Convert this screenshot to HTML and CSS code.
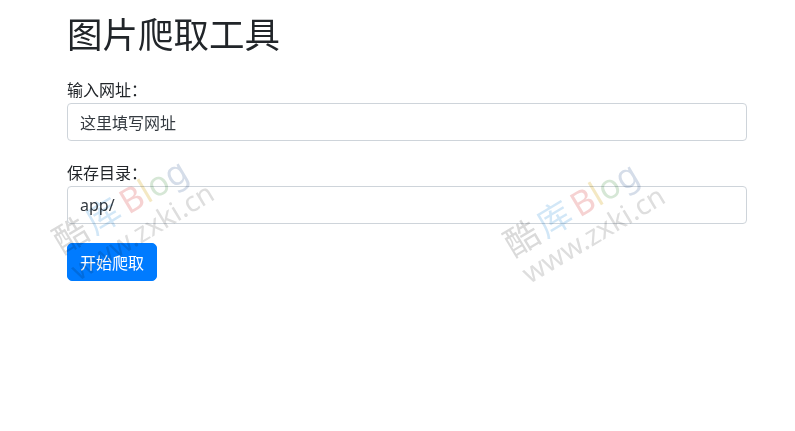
FILE: index.html
```html
<!DOCTYPE html>
<html lang="zh-CN">
<head>
<meta charset="utf-8">
<title>图片爬取工具</title>
<link rel="stylesheet" href="styles.css">
</head>
<body>
<main class="page">
  <h1 class="title">图片爬取工具</h1>
  <form class="form">
    <div class="group">
      <label class="label" for="url">输入网址：</label>
      <input class="input" id="url" type="text" value="这里填写网址">
    </div>
    <div class="group">
      <label class="label" for="dir">保存目录：</label>
      <input class="input" id="dir" type="text" value="app/">
    </div>
    <button class="btn" type="button">开始爬取</button>
  </form>
</main>
<div class="watermark wm-left" aria-hidden="true">
  <div class="wm-line1"><span class="wm-ku">酷</span><span class="wm-ku2">库</span><span class="wm-b">B</span><span class="wm-l">l</span><span class="wm-o">o</span><span class="wm-g">g</span></div>
  <div class="wm-line2">www.zxki.cn</div>
</div>
<div class="watermark wm-right" aria-hidden="true">
  <div class="wm-line1"><span class="wm-ku">酷</span><span class="wm-ku2">库</span><span class="wm-b">B</span><span class="wm-l">l</span><span class="wm-o">o</span><span class="wm-g">g</span></div>
  <div class="wm-line2">www.zxki.cn</div>
</div>
</body>
</html>
```

FILE: styles.css
```css
* { box-sizing: border-box; }

html, body {
  margin: 0;
  background: #ffffff;
}

body {
  font-family: "Noto Sans", "Noto Sans CJK SC", sans-serif;
  font-size: 16px;
  line-height: 1.5;
  color: #212529;
  position: relative;
  min-height: 431px;
  overflow: hidden;
}

.page {
  width: 680px;
  margin-left: 67px;
  padding-top: 12px;
}

.title {
  margin: 0 0 22px;
  font-family: "Noto Sans CJK SC", sans-serif;
  font-size: 35.5px;
  font-weight: 400;
  line-height: 1.2;
  color: #212529;
}

.form {
  display: flex;
  flex-direction: column;
  align-items: flex-start;
}

.group {
  width: 100%;
  margin-bottom: 19px;
}

.label {
  display: block;
  font-family: "Noto Sans CJK SC", sans-serif;
  line-height: 24px;
  margin-bottom: 2px;
}

.input {
  display: block;
  width: 100%;
  height: 38px;
  padding: 6px 12px;
  font-family: "Noto Sans", "Noto Sans CJK SC", sans-serif;
  font-size: 16px;
  line-height: 1.5;
  color: #343a40;
  background: #fff;
  border: 1px solid #ced4da;
  border-radius: 4px;
}

.btn {
  height: 38px;
  padding: 6px 12px;
  font-family: "Noto Sans CJK SC", sans-serif;
  font-size: 16px;
  line-height: 1.5;
  color: #fff;
  background: #007bff;
  border: 1px solid #007bff;
  border-radius: 5px;
}

.watermark {
  position: absolute;
  pointer-events: none;
  transform: rotate(-31deg);
  transform-origin: left top;
  font-family: "Noto Sans", "Noto Sans CJK SC", sans-serif;
  mix-blend-mode: multiply;
}

.wm-left { left: 47px; top: 229px; }
.wm-right { left: 498px; top: 232px; }

.wm-line1 {
  font-size: 34px;
  line-height: 1;
  white-space: nowrap;
}

.wm-line2 {
  font-size: 28px;
  line-height: 1.1;
  margin-top: 1px;
  color: #dedede;
  white-space: nowrap;
}

.wm-ku { color: #dadada; margin-right: 4px; }
.wm-ku2 { color: #d2e7f7; margin-right: 5px; }
.wm-b { color: #f6d2d2; }
.wm-l { color: #f4e8c3; }
.wm-o { color: #d6e7d6; }
.wm-g { color: #d5dde9; }
```
